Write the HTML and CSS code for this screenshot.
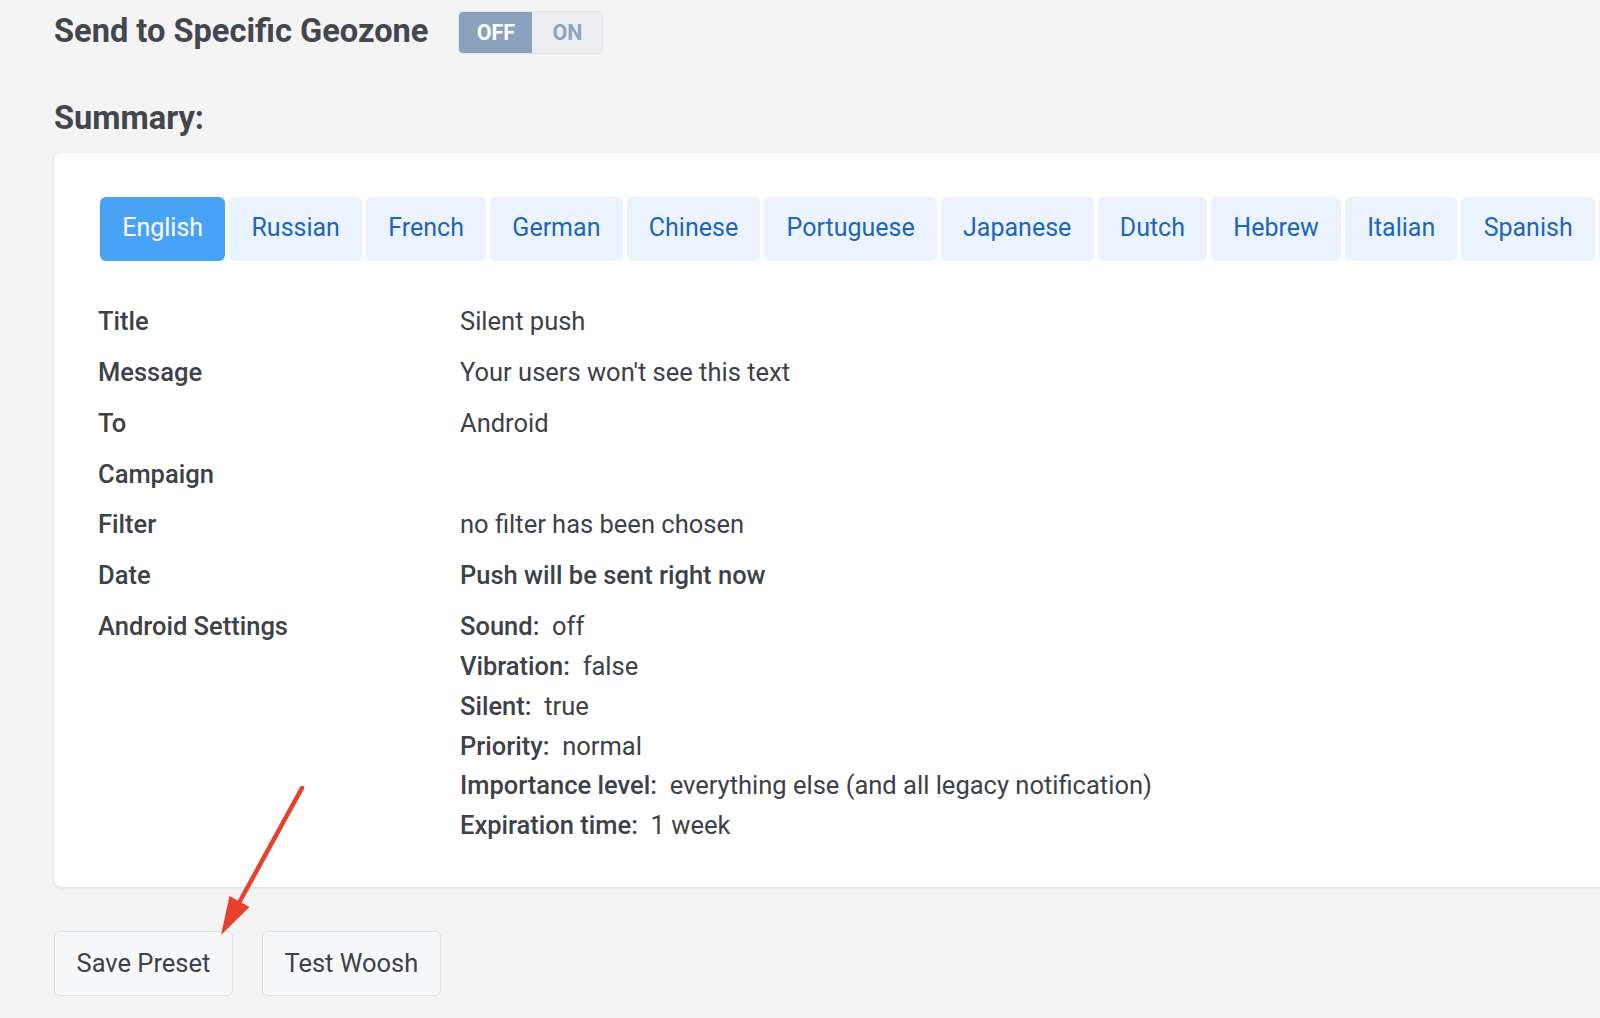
FILE: index.html
```html
<!DOCTYPE html>
<html>
<head>
<meta charset="utf-8">
<link rel="stylesheet" href="styles.css">
</head>
<body>
<div class="page">
  <div class="geo-row">
    <h2 class="heading geo-title">Send to Specific Geozone</h2>
    <div class="toggle">
      <span class="toggle-off">OFF</span>
      <span class="toggle-on">ON</span>
    </div>
  </div>
  <h2 class="heading summary-title">Summary:</h2>
  <div class="card">
    <div class="tabs">
      <span class="tab active">English</span>
      <span class="tab">Russian</span>
      <span class="tab">French</span>
      <span class="tab">German</span>
      <span class="tab">Chinese</span>
      <span class="tab">Portuguese</span>
      <span class="tab">Japanese</span>
      <span class="tab">Dutch</span>
      <span class="tab">Hebrew</span>
      <span class="tab">Italian</span>
      <span class="tab">Spanish</span>
      <span class="tab tab-empty"></span>
    </div>
    <div class="rows">
      <div class="row"><div class="label">Title</div><div class="value">Silent push</div></div>
      <div class="row"><div class="label">Message</div><div class="value">Your users won't see this text</div></div>
      <div class="row"><div class="label">To</div><div class="value">Android</div></div>
      <div class="row"><div class="label">Campaign</div><div class="value"></div></div>
      <div class="row"><div class="label">Filter</div><div class="value">no filter has been chosen</div></div>
      <div class="row"><div class="label">Date</div><div class="value strong">Push will be sent right now</div></div>
      <div class="row"><div class="label">Android Settings</div>
        <div class="value sublist">
          <div><b>Sound:</b>&nbsp; off</div>
          <div><b>Vibration:</b>&nbsp; false</div>
          <div><b>Silent:</b>&nbsp; true</div>
          <div><b>Priority:</b>&nbsp; normal</div>
          <div><b>Importance level:</b>&nbsp; everything else (and all legacy notification)</div>
          <div><b>Expiration time:</b>&nbsp; 1 week</div>
        </div>
      </div>
    </div>
  </div>
  <div class="actions">
    <button class="btn">Save Preset</button>
    <button class="btn">Test Woosh</button>
  </div>
</div>
<svg class="arrow" width="1600" height="1018" viewBox="0 0 1600 1018">
  <line x1="302" y1="788" x2="240" y2="901" stroke="#e8412a" stroke-width="4.5" stroke-linecap="round"/>
  <polygon points="221,935 229.5,896 249.5,907" fill="#e8412a"/>
</svg>
</body>
</html>
```
FILE: styles.css
```css
html, body {
  margin: 0;
  padding: 0;
}
body {
  background: #f4f4f4;
  font-family: Roboto, "Liberation Sans", sans-serif;
  color: #3d4148;
  overflow: hidden;
  width: 1600px;
  height: 1018px;
  position: relative;
}
.page {
  padding-left: 54px;
  width: 1800px;
}
.geo-row {
  display: flex;
  align-items: center;
  margin-top: 11px;
  height: 43px;
}
.heading {
  margin: 0;
  font-size: 32.6px;
  line-height: 42px;
  font-weight: 700;
  color: #43464d;
}
.geo-title {
  margin-bottom: 3px;
}
.toggle {
  display: flex;
  margin-left: 30px;
  height: 43px;
  border-radius: 5px;
  overflow: hidden;
  border: 1px solid #e1e4e9;
  box-sizing: border-box;
}
.toggle span {
  display: flex;
  align-items: center;
  justify-content: center;
  font-size: 21.5px;
  font-weight: 700;
}
.toggle-off {
  width: 73px;
  background: #8aa2bd;
  color: #ffffff;
}
.toggle-on {
  width: 70px;
  background: #eceef1;
  color: #8ea4bd;
}
.summary-title {
  margin-top: 43px;
}
.card {
  margin-top: 14px;
  background: #ffffff;
  border-radius: 7px;
  box-shadow: 0 1px 3px rgba(0, 0, 0, 0.13);
  padding: 44px 0 36px 44px;
  width: 1700px;
}
.tabs {
  display: flex;
  gap: 4px;
  margin-left: 2px;
  flex-wrap: nowrap;
}
.tab {
  flex: none;
  height: 64px;
  box-sizing: border-box;
  padding: 0 22.2px 3px;
  display: flex;
  align-items: center;
  background: #ebf4fe;
  color: #1f64bb;
  font-size: 25px;
  border-radius: 6px;
}
.tab-empty {
  width: 80px;
}
.tab.active {
  background: #48a2f6;
  color: #ffffff;
}
.rows {
  margin-top: 34.5px;
}
.row {
  display: flex;
  padding: 11.45px 0;
  font-size: 25.5px;
  line-height: 28px;
}
.label {
  width: 362px;
  flex: none;
  font-weight: 500;
}
.value {
  font-weight: 400;
}
.value.strong {
  font-weight: 500;
}
.sublist {
  display: flex;
  flex-direction: column;
  gap: 11.8px;
}
.sublist b {
  font-weight: 500;
}
.actions {
  display: flex;
  gap: 29px;
  margin-top: 44px;
}
.btn {
  height: 65px;
  padding: 0 21.5px;
  background: #f7f8fa;
  border: 1.5px solid #dcdfe3;
  border-radius: 5px;
  font-family: Roboto, "Liberation Sans", sans-serif;
  font-size: 25.5px;
  color: #3d4148;
}
.arrow {
  position: absolute;
  left: 0;
  top: 0;
  pointer-events: none;
}
```
